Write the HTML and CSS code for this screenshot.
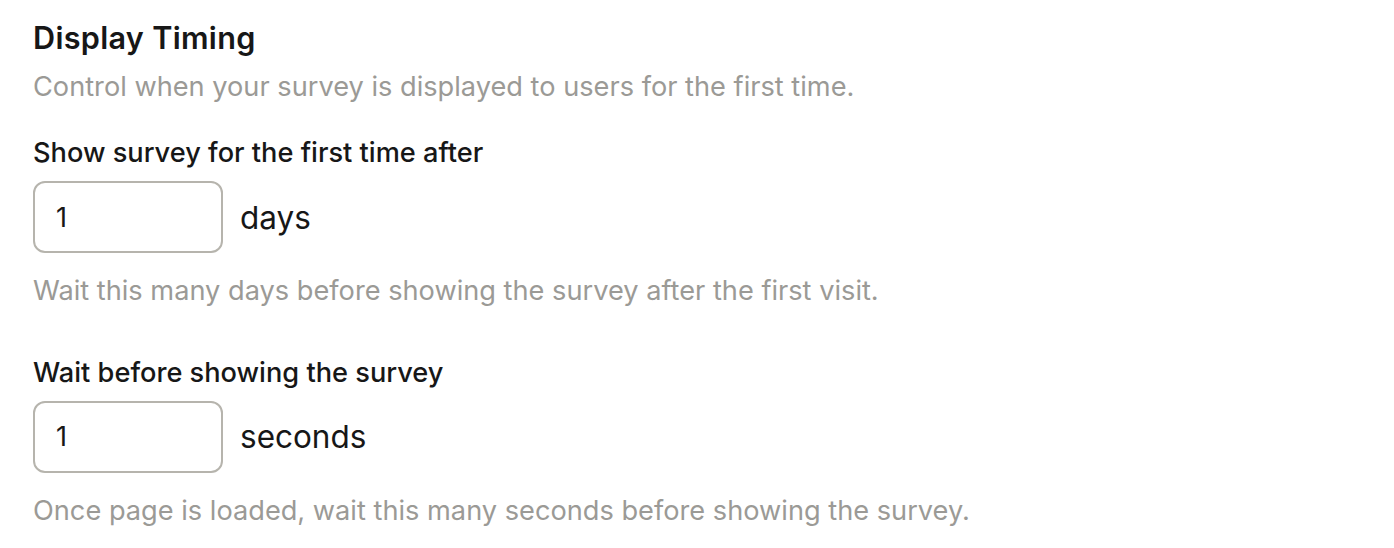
FILE: index.html
```html
<!DOCTYPE html>
<html lang="en">
<head>
    <meta charset="UTF-8">
    <meta name="viewport" content="width=device-width, initial-scale=1.0">
    <title>Display Timing</title>
    <link rel="stylesheet" href="styles.css">
</head>
<body>
    <div class="section">
        <h2 class="section-title">Display Timing</h2>
        <p class="section-desc">Control when your survey is displayed to users for the first time.</p>

        <div class="field">
            <label class="field-label" for="daysInput">Show survey for the first time after</label>
            <div class="field-row">
                <input type="text" id="daysInput" class="num-input" value="1">
                <span class="unit">days</span>
            </div>
            <p class="field-help">Wait this many days before showing the survey after the first visit.</p>
        </div>

        <div class="field">
            <label class="field-label" for="secondsInput">Wait before showing the survey</label>
            <div class="field-row">
                <input type="text" id="secondsInput" class="num-input" value="1">
                <span class="unit">seconds</span>
            </div>
            <p class="field-help">Once page is loaded, wait this many seconds before showing the survey.</p>
        </div>
    </div>
</body>
</html>
```

FILE: styles.css
```css
body {
    font-family: Inter, 'Noto Sans', sans-serif;
    margin: 0;
    padding: 0;
    background-color: #fff;
    color: #171717;
}
.section {
    padding: 14px 33px 0;
}
.section-title {
    font-size: 30.6px;
    font-weight: 600;
    line-height: 47.6px;
    letter-spacing: 0.3px;
    margin: 0;
}
.section-desc {
    font-size: 27.2px;
    line-height: 40.8px;
    color: #9b9a96;
    margin: 5px 0 26px;
}
.field {
    margin-bottom: 41px;
}
.field-label {
    display: block;
    font-size: 27.2px;
    font-weight: 500;
    line-height: 40.8px;
}
.field-row {
    display: flex;
    align-items: center;
    gap: 17px;
    margin-top: 7px;
}
.num-input {
    width: 190px;
    height: 72px;
    box-sizing: border-box;
    padding: 0 21px;
    border: 2px solid #b6b4ad;
    border-radius: 12px;
    font-family: inherit;
    font-size: 27.2px;
    color: #171717;
    background: #fff;
    outline: none;
}
.unit {
    font-size: 31.5px;
}
.field-help {
    font-size: 27.2px;
    line-height: 40.8px;
    color: #9b9a96;
    margin: 18px 0 0;
}
```
